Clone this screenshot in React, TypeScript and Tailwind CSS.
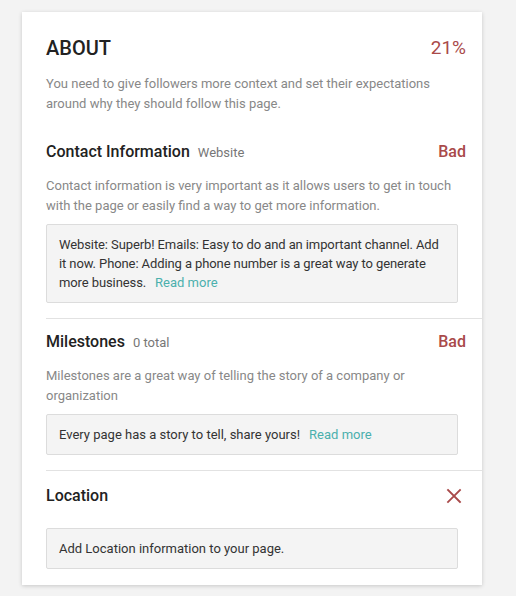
import React from "react";

type Section = {
  title: string;
  subtitle?: string;
  status: "bad" | "missing";
  description?: string;
  tip: string;
  tipClass?: string;
  readMore?: boolean;
};

const sections: Section[] = [
  {
    title: "Contact Information",
    subtitle: "Website",
    status: "bad",
    description:
      "Contact information is very important as it allows users to get in touch with the page or easily find a way to get more information.",
    tip: "Website: Superb! Emails: Easy to do and an important channel. Add it now. Phone: Adding a phone number is a great way to generate more business.",
    tipClass: "tracking-[-0.1px]",
    readMore: true,
  },
  {
    title: "Milestones",
    subtitle: "0 total",
    status: "bad",
    description: "Milestones are a great way of telling the story of a company or organization",
    tip: "Every page has a story to tell, share yours!",
    readMore: true,
  },
  {
    title: "Location",
    status: "missing",
    tip: "Add Location information to your page.",
  },
];

const CrossIcon = () => (
  <svg width="16" height="16" viewBox="0 0 16 16" className="mr-1">
    <path d="M2 2L14 14M14 2L2 14" stroke="#a94a4a" strokeWidth="1.8" strokeLinecap="square" />
  </svg>
);

const App: React.FC = () => {
  return (
    <div className="min-h-[596px] bg-[#f3f3f3] pt-[12px] pl-[22px] font-['Roboto',sans-serif]">
      <div className="w-[460px] bg-white pl-6 pr-4 pt-6 pb-4 shadow-[0_1px_4px_rgba(0,0,0,0.18)]">
        {/* Header */}
        <div className="flex h-6 items-center justify-between">
          <h1 className="text-[20px] font-medium text-[#222]">ABOUT</h1>
          <span className="text-[19px] text-[#a94a4a]">21%</span>
        </div>
        <p className="mt-[14px] text-[13px] leading-5 text-[#888]">
          You need to give followers more context and set their expectations around why they should follow this page.
        </p>

        {sections.map((s, i) => (
          <div key={s.title}>
            <div
              className={`flex h-[22px] items-center justify-between ${
                i === 0 ? "mt-[27px]" : s.description ? "mt-3" : "mt-[14px]"
              }`}
            >
              <div className="flex items-baseline gap-2">
                <h2 className="text-[16px] font-medium text-[#222]">{s.title}</h2>
                {s.subtitle && <span className="text-[13px] text-[#777]">{s.subtitle}</span>}
              </div>
              {s.status === "bad" ? (
                <span className="text-[16px] font-medium text-[#a94a4a]">Bad</span>
              ) : (
                <CrossIcon />
              )}
            </div>

            {s.description && (
              <p className="mt-[13px] text-[13px] leading-5 text-[#888]">{s.description}</p>
            )}

            <div
              className={`mr-2 rounded-[2px] border border-[#dcdcdc] bg-[#f4f4f4] px-3 py-[10px] text-[13px] leading-[19px] text-[#333] ${
                s.description ? "mt-2" : "mt-[21px]"
              } ${s.tipClass ?? ""}`}
            >
              {s.tip}
              {s.readMore && (
                <a href="#" className="ml-[9px] tracking-normal text-[#4bb0ad]">
                  Read more
                </a>
              )}
            </div>

            {i < sections.length - 1 && <div className="-mr-4 mt-[15px] h-px bg-[#e2e2e2]" />}
          </div>
        ))}
      </div>
    </div>
  );
};

export default App;
